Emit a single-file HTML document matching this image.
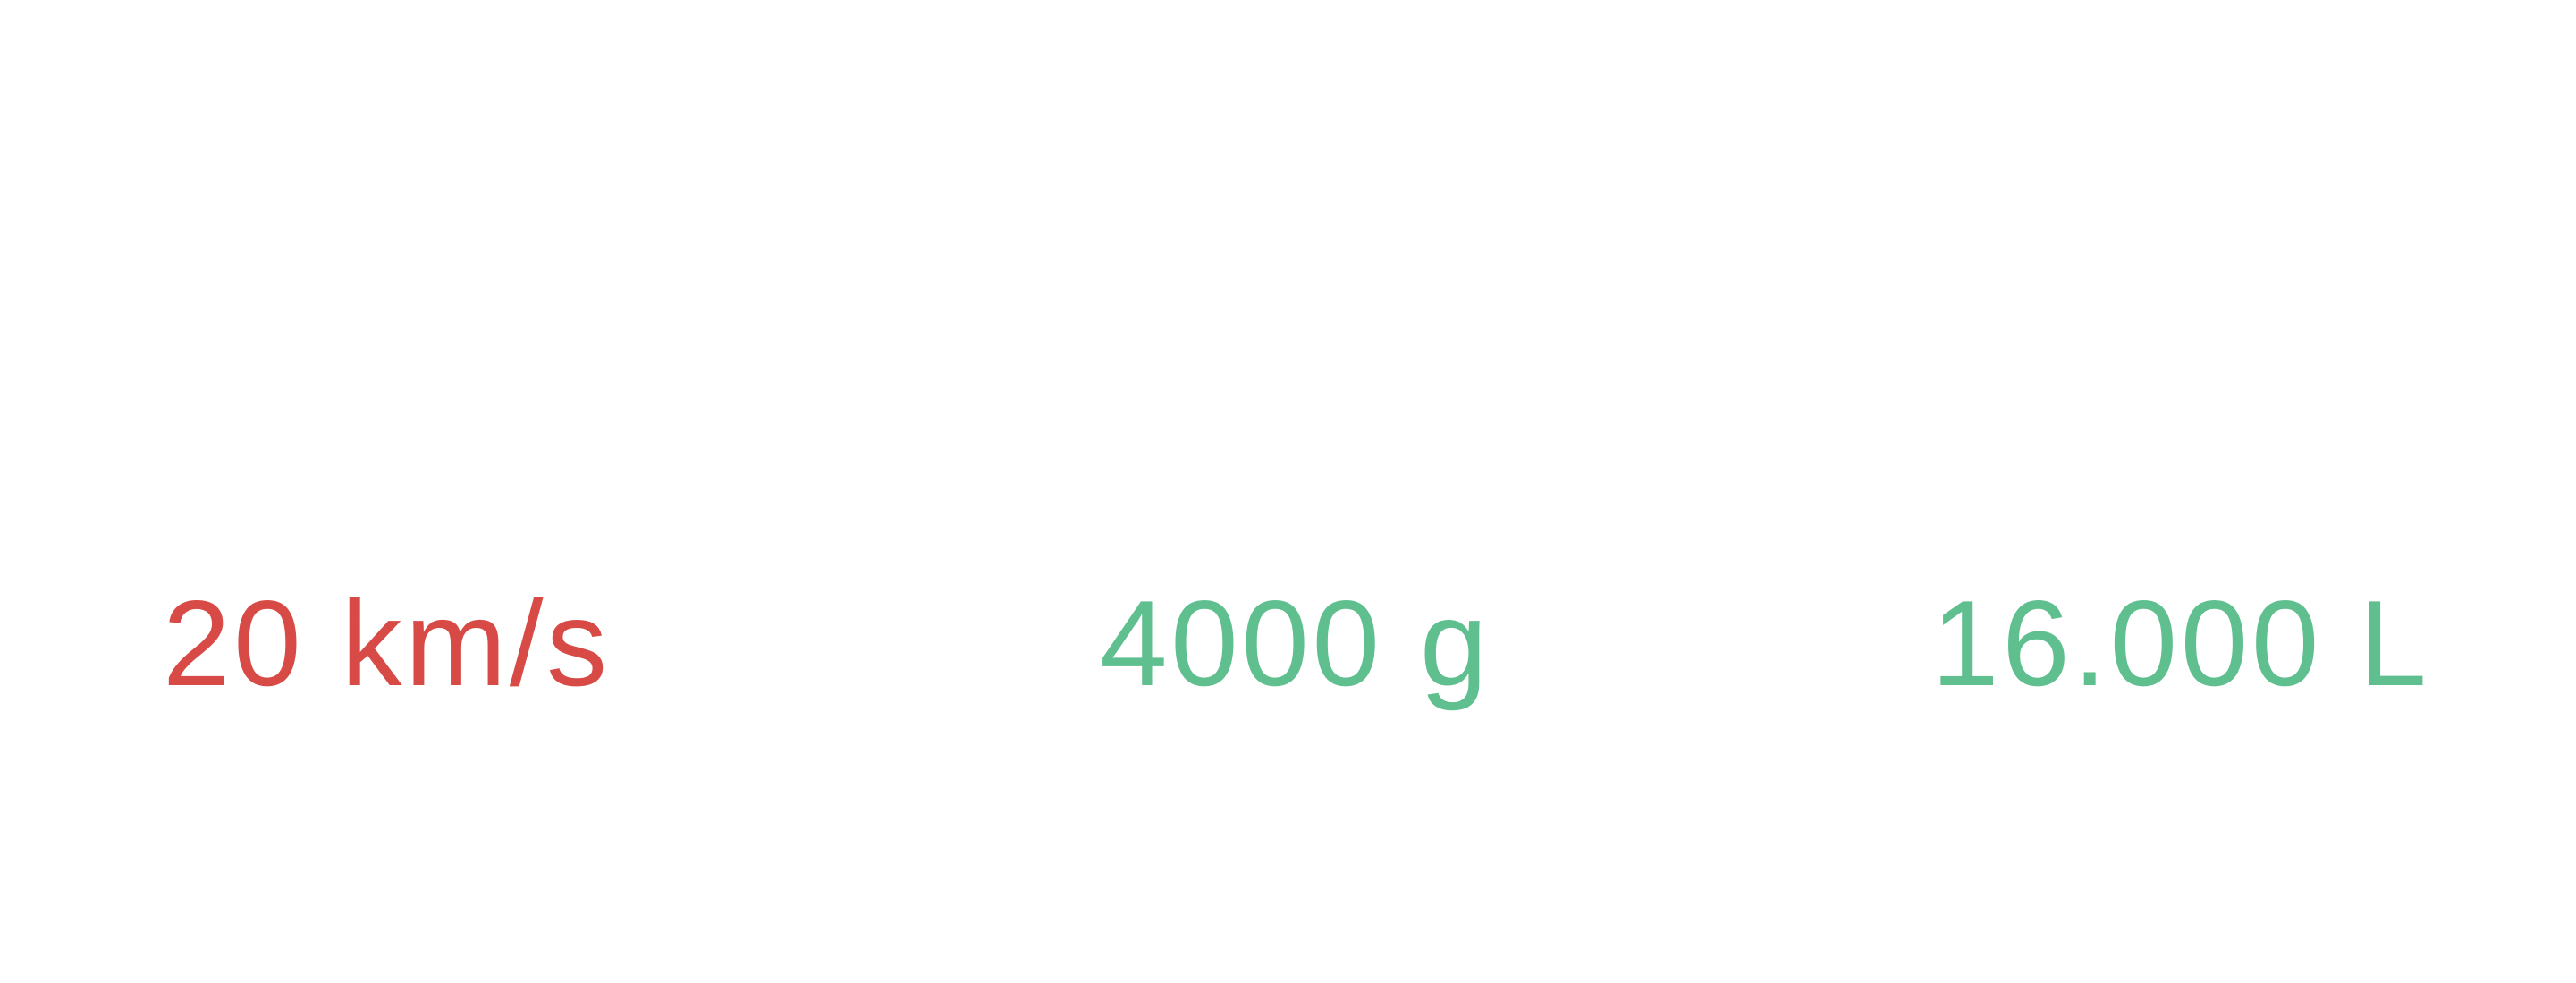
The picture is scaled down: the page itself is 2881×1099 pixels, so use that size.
<!DOCTYPE html>
<html><head><meta charset="utf-8"><style>
html,body{margin:0;padding:0;background:#fff;width:2881px;height:1099px;overflow:hidden;}
.t{position:absolute;top:651px;font-family:"Liberation Sans",sans-serif;font-size:136px;line-height:1;white-space:nowrap;font-weight:normal;letter-spacing:3.5px;}
.r{color:#d84a45;}
.g{color:#5fbf8f;}
</style></head><body>
<div class="t r" style="left:182px">20 km/s</div>
<div class="t g" style="left:1230px">4000 g</div>
<div class="t g" style="left:2160px">16.000 L</div>
</body></html>
